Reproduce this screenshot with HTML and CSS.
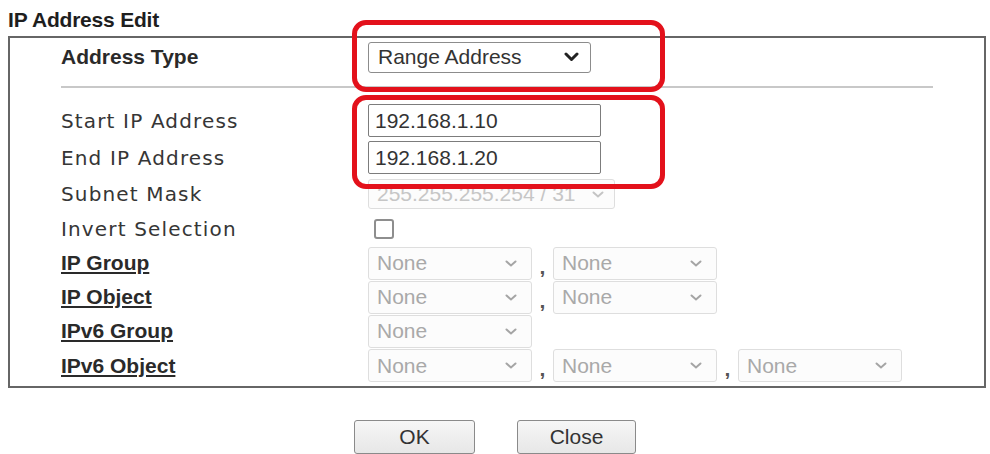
FILE: index.html
```html
<!DOCTYPE html>
<html lang="en">
<head>
  <meta charset="UTF-8" />
  <title>IP Address Edit</title>
  <link rel="stylesheet" href="styles.css">
</head>
<body>

  <h1 class="title">IP Address Edit</h1>

  <div class="panel">
    <div class="type-row">
      <span class="label strong">Address Type</span>
      <span class="select select-type">Range Address
        <svg class="chev" width="15" height="10" viewBox="0 0 15 10"><path d="M2 2 L7.5 7.5 L13 2" fill="none" stroke="#222" stroke-width="3" stroke-linecap="round" stroke-linejoin="round"/></svg>
      </span>
    </div>

    <hr class="divider">

    <div class="rows">
      <span class="label">Start IP Address</span>
      <div class="field"><input class="ip" type="text" value="192.168.1.10"></div>

      <span class="label">End IP Address</span>
      <div class="field"><input class="ip" type="text" value="192.168.1.20"></div>

      <span class="label">Subnet Mask</span>
      <div class="field">
        <span class="select off select-mask">255.255.255.254 / 31
          <svg class="chev" width="12" height="7" viewBox="0 0 12 7"><path d="M1.5 1.5 L6 5.5 L10.5 1.5" fill="none" stroke="#c4c4c4" stroke-width="2" stroke-linecap="round"/></svg>
        </span>
      </div>

      <span class="label">Invert Selection</span>
      <div class="field"><span class="check"></span></div>

      <a class="label strong link">IP Group</a>
      <div class="field">
        <span class="select off">None<svg class="chev" width="12" height="7" viewBox="0 0 12 7"><path d="M1.5 1.5 L6 5.5 L10.5 1.5" fill="none" stroke="#a5a5a5" stroke-width="2" stroke-linecap="round"/></svg></span>
        <span class="comma">,</span>
        <span class="select off">None<svg class="chev" width="12" height="7" viewBox="0 0 12 7"><path d="M1.5 1.5 L6 5.5 L10.5 1.5" fill="none" stroke="#a5a5a5" stroke-width="2" stroke-linecap="round"/></svg></span>
      </div>

      <a class="label strong link">IP Object</a>
      <div class="field">
        <span class="select off">None<svg class="chev" width="12" height="7" viewBox="0 0 12 7"><path d="M1.5 1.5 L6 5.5 L10.5 1.5" fill="none" stroke="#a5a5a5" stroke-width="2" stroke-linecap="round"/></svg></span>
        <span class="comma">,</span>
        <span class="select off">None<svg class="chev" width="12" height="7" viewBox="0 0 12 7"><path d="M1.5 1.5 L6 5.5 L10.5 1.5" fill="none" stroke="#a5a5a5" stroke-width="2" stroke-linecap="round"/></svg></span>
      </div>

      <a class="label strong link">IPv6 Group</a>
      <div class="field">
        <span class="select off">None<svg class="chev" width="12" height="7" viewBox="0 0 12 7"><path d="M1.5 1.5 L6 5.5 L10.5 1.5" fill="none" stroke="#a5a5a5" stroke-width="2" stroke-linecap="round"/></svg></span>
      </div>

      <a class="label strong link">IPv6 Object</a>
      <div class="field">
        <span class="select off">None<svg class="chev" width="12" height="7" viewBox="0 0 12 7"><path d="M1.5 1.5 L6 5.5 L10.5 1.5" fill="none" stroke="#a5a5a5" stroke-width="2" stroke-linecap="round"/></svg></span>
        <span class="comma">,</span>
        <span class="select off">None<svg class="chev" width="12" height="7" viewBox="0 0 12 7"><path d="M1.5 1.5 L6 5.5 L10.5 1.5" fill="none" stroke="#a5a5a5" stroke-width="2" stroke-linecap="round"/></svg></span>
        <span class="comma">,</span>
        <span class="select off">None<svg class="chev" width="12" height="7" viewBox="0 0 12 7"><path d="M1.5 1.5 L6 5.5 L10.5 1.5" fill="none" stroke="#a5a5a5" stroke-width="2" stroke-linecap="round"/></svg></span>
      </div>
    </div>

    <div class="mark mark-type"></div>
    <div class="mark mark-range"></div>
  </div>

  <div class="actions">
    <button class="btn btn-ok">OK</button>
    <button class="btn btn-close">Close</button>
  </div>

</body>
</html>
```

FILE: styles.css
```css
body {
  margin: 0;
  padding: 8px 0 0 8px;
  font-family: 'Liberation Sans', Arial, sans-serif;
  color: #333;
  background: #fff;
  overflow: hidden;
}

.title {
  margin: 0 0 4px;
  font-size: 21px;
  line-height: 24px;
  font-weight: bold;
  color: #1e1e1e;
  letter-spacing: -0.2px;
}

.panel {
  position: relative;
  width: 978px;
  height: 352px;
  box-sizing: border-box;
  border: 2px solid #666;
}

.type-row {
  display: grid;
  grid-template-columns: 307px 1fr;
  align-items: center;
  height: 38px;
  padding-left: 51px;
}

.divider {
  margin: 10px 51px 14px;
  border: none;
  border-top: 2px solid #c8c8c8;
}

.rows {
  display: grid;
  grid-template-columns: 307px 1fr;
  grid-template-rows: 37px 37px 36px 34px 34px 34px 34px 35px;
  align-items: center;
  padding-left: 51px;
}

.label {
  font-family: 'DejaVu Sans', Tahoma, sans-serif;
  font-size: 20px;
  letter-spacing: 1.15px;
  color: #363636;
}

.label.strong {
  font-family: 'Liberation Sans', Arial, sans-serif;
  font-size: 21px;
  letter-spacing: 0;
  font-weight: bold;
  color: #2a2a2a;
}

.link {
  text-decoration: underline;
  text-decoration-thickness: 2px;
  text-underline-offset: 2px;
}

.field {
  display: flex;
  align-items: center;
}

.select {
  display: flex;
  align-items: center;
  justify-content: space-between;
  box-sizing: border-box;
  width: 223px;
  height: 31px;
  padding: 0 11px 0 9px;
  border: 1px solid #8c8c8c;
  border-radius: 3px;
  font-size: 21px;
  color: #333;
  background: #fff;
}

.select.off {
  width: 164px;
  height: 33px;
  padding: 0 14px 0 8px;
  border-color: #dedede;
  color: #a9a9a9;
  background: #fcfcfc;
}

.select-mask.off {
  width: 247px;
  height: 30px;
  color: #c6c6c6;
  padding-right: 10px;
}

.ip {
  box-sizing: border-box;
  width: 233px;
  height: 33px;
  padding: 0 6px;
  border: 1px solid #7c7c7c;
  border-radius: 2px;
  font-family: 'Liberation Sans', Arial, sans-serif;
  font-size: 21px;
  color: #333;
  outline: none;
}

.check {
  width: 20px;
  height: 20px;
  margin-left: 6px;
  box-sizing: border-box;
  border: 2px solid #8e8e8e;
  border-radius: 3px;
}

.comma {
  width: 21px;
  text-align: center;
  font-size: 21px;
  font-weight: bold;
  color: #555;
  align-self: flex-end;
  line-height: 22px;
  margin-bottom: 2px;
}

.mark {
  position: absolute;
  left: 342px;
  width: 313px;
  box-sizing: border-box;
  border: 5px solid #e3111b;
  border-radius: 14px;
}

.mark-type {
  top: -18px;
  height: 72px;
}

.mark-range {
  top: 57px;
  height: 94px;
}

.actions {
  display: flex;
  justify-content: center;
  gap: 42px;
  margin: 32px 0 0 -8px;
}

.btn {
  height: 34px;
  border: 1px solid #8a8a8a;
  border-radius: 3px;
  background: linear-gradient(#f6f6f6, #e7e7e7);
  font-family: 'Liberation Sans', Arial, sans-serif;
  font-size: 21px;
  color: #333;
}

.btn-ok {
  width: 121px;
}

.btn-close {
  width: 119px;
}
```
